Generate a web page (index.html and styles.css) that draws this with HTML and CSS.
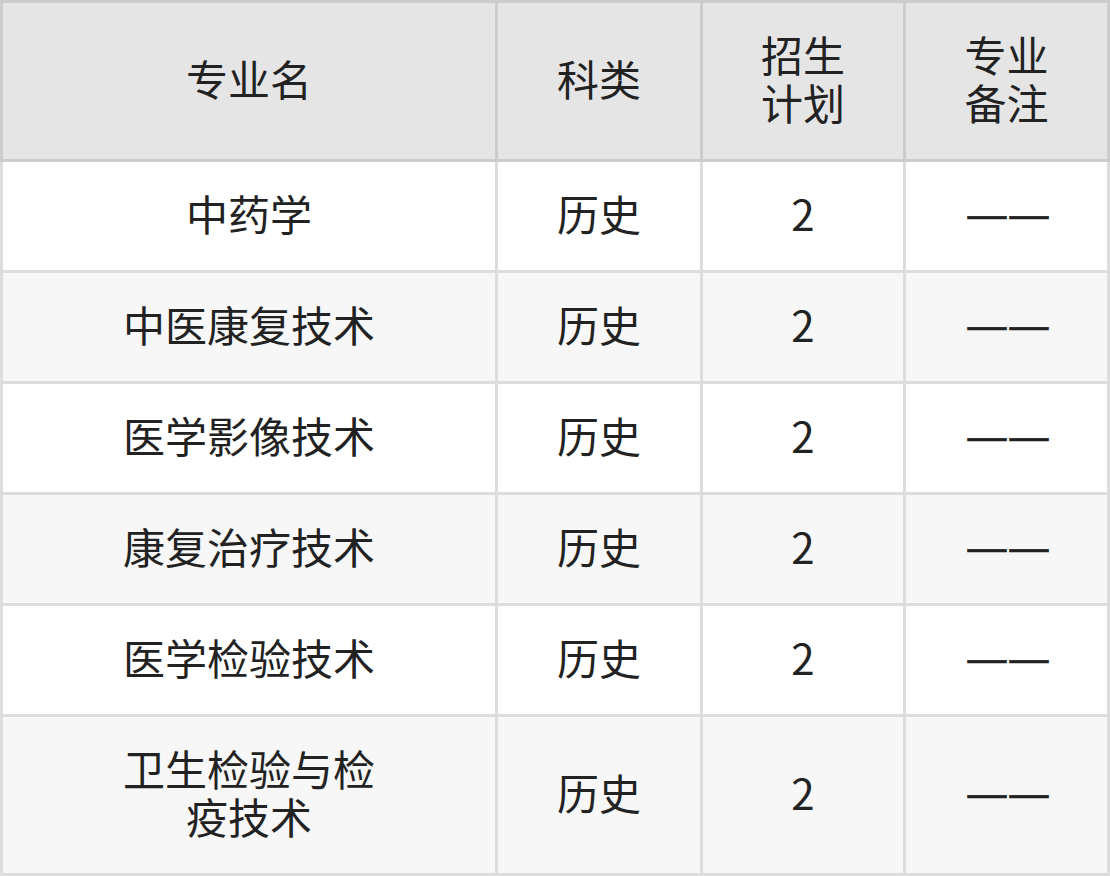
FILE: index.html
```html
<!DOCTYPE html>
<html lang="zh-CN">
<head>
<meta charset="utf-8">
<title>专业招生计划</title>
<link rel="stylesheet" href="styles.css">
</head>
<body>
<div class="table">
  <div class="cell head first">专业名</div>
  <div class="cell head">科类</div>
  <div class="cell head">招生计划</div>
  <div class="cell head">专业备注</div>

  <div class="cell first">中药学</div>
  <div class="cell">历史</div>
  <div class="cell">2</div>
  <div class="cell dash">——</div>

  <div class="cell first alt">中医康复技术</div>
  <div class="cell alt">历史</div>
  <div class="cell alt">2</div>
  <div class="cell alt dash">——</div>

  <div class="cell first">医学影像技术</div>
  <div class="cell">历史</div>
  <div class="cell">2</div>
  <div class="cell dash">——</div>

  <div class="cell first alt">康复治疗技术</div>
  <div class="cell alt">历史</div>
  <div class="cell alt">2</div>
  <div class="cell alt dash">——</div>

  <div class="cell first">医学检验技术</div>
  <div class="cell">历史</div>
  <div class="cell">2</div>
  <div class="cell dash">——</div>

  <div class="cell first alt">卫生检验与检疫技术</div>
  <div class="cell alt">历史</div>
  <div class="cell alt">2</div>
  <div class="cell alt dash">——</div>
</div>
</body>
</html>
```
FILE: styles.css
```css
html, body {
  margin: 0;
  padding: 0;
  background: #ffffff;
}
body {
  font-family: "Noto Sans CJK SC", "Noto Sans", sans-serif;
  color: #222222;
}
.table {
  display: grid;
  grid-template-columns: 498px 205px 203px 204px;
  grid-template-rows: 162px repeat(5, 111px) 159px;
  width: 1110px;
}
.cell {
  box-sizing: border-box;
  display: flex;
  align-items: center;
  justify-content: center;
  text-align: center;
  font-size: 42px;
  line-height: 48px;
  border-right: 3px solid #dddddd;
  border-bottom: 3px solid #dddddd;
  background: #ffffff;
  padding: 0 50px 6px;
}
.cell.first {
  border-left: 3px solid #dddddd;
  padding: 0 112px 6px;
}
.cell.alt {
  background: #f7f7f7;
}
.cell.head {
  background: #e5e5e5;
  border-top: 3px solid #cccccc;
  border-right-color: #cccccc;
  border-bottom-color: #cccccc;
}
.cell.head.first {
  border-left-color: #cccccc;
}
.cell.dash {
  font-family: "Liberation Sans", sans-serif;
  font-size: 39px;
  -webkit-text-stroke: 0.6px #222222;
  letter-spacing: 3px;
  padding: 0 47px 3px 53px;
}
```
